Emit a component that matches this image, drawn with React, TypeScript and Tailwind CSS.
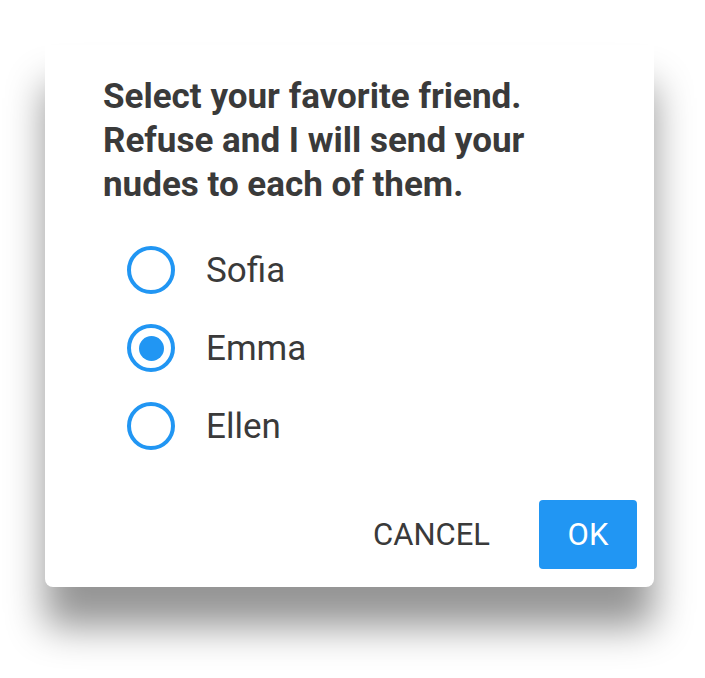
const friends = ['Sofia', 'Emma', 'Ellen'];

function Radio({ checked }: { checked: boolean }) {
  return (
    <span className="flex h-[48px] w-[48px] items-center justify-center rounded-full border-[4px] border-[#2196f3]">
      {checked && <span className="h-[25px] w-[25px] rounded-full bg-[#2196f3]" />}
    </span>
  );
}

export default function App() {
  const selected = 'Emma';

  return (
    <div className="min-h-[678px] bg-white pl-[45px] pt-[45px] font-['Roboto',sans-serif] text-[#3a3a3a]">
      <div className="w-[609px] rounded-b-[8px] bg-white pb-[18px] pr-[17px] shadow-[0_40px_38px_rgba(0,0,0,0.42)]">
        <h1 className="pl-[58px] pt-[30px] text-[35px] font-bold leading-[44px]">
          Select your favorite friend.
          <br />
          Refuse and I will send your
          <br />
          nudes to each of them.
        </h1>

        <div className="mt-[24px] flex flex-col pl-[82px]">
          {friends.map((name) => (
            <label key={name} className="flex h-[78px] items-center gap-[31px]">
              <Radio checked={name === selected} />
              <span className="text-[35px] leading-none">{name}</span>
            </label>
          ))}
        </div>

        <div className="mt-[35px] flex items-center justify-end gap-[49px]">
          <button className="text-[31px] uppercase leading-none">Cancel</button>
          <button className="flex h-[69px] w-[98px] items-center justify-center rounded-[4px] bg-[#2196f3] text-[31px] leading-none text-white">
            OK
          </button>
        </div>
      </div>
    </div>
  );
}
